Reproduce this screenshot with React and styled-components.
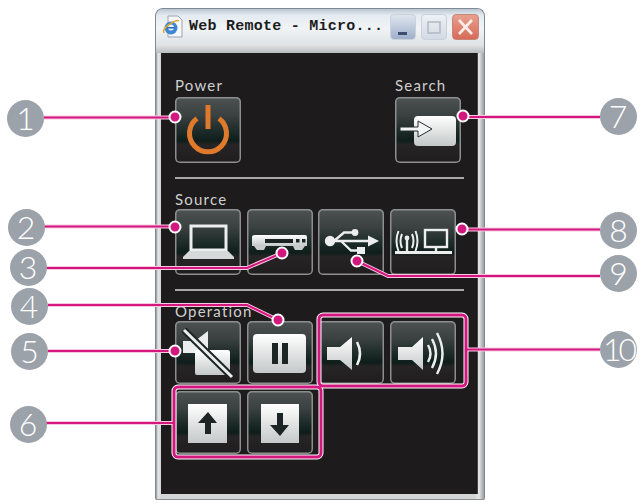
import React from 'react';
import styled, { createGlobalStyle } from 'styled-components';

const GlobalStyle = createGlobalStyle`
  html, body { margin: 0; padding: 0; background: #fff; }
  body { font-family: "Liberation Sans", Arial, sans-serif; }
`;

const MAGENTA = '#d3177f';

const Stage = styled.div`
  position: relative;
  width: 642px;
  height: 504px;
  overflow: hidden;
  background: #fff;
  padding: 8px 0 0 155px;
  box-sizing: border-box;
`;

const Window = styled.div`
  width: 330px;
  height: 492px;
  box-sizing: border-box;
  display: flex;
  flex-direction: column;
  border: 1px solid #7f8a94;
  border-bottom-color: #8f8f8f;
  border-radius: 8px 8px 2px 2px;
  background: linear-gradient(90deg, #8e9296 0, #e4e6e8 2px, #d2d4d6 5px, #d2d4d6 97%, #e6e6e6 98.5%, #9a9c9e 100%);
`;

const TitleBar = styled.div`
  height: 35px;
  flex: none;
  display: flex;
  align-items: center;
  padding: 0 5px 0 6px;
  border-radius: 7px 7px 0 0;
  background: linear-gradient(180deg, #b9c6d2 0, #e4ebf1 18%, #f1f4f6 55%, #dfe4e8 100%);
`;

const TitleText = styled.div`
  flex: 1;
  margin-left: 5px;
  font-family: "Liberation Mono", monospace;
  font-weight: 700;
  font-size: 15px;
  letter-spacing: 0.25px;
  color: #1c1c20;
  white-space: nowrap;
`;

const WinButton = styled.div`
  width: ${p => p.$w || 26}px;
  height: 26px;
  margin-left: 5px;
  box-sizing: border-box;
  position: relative;
  border-radius: 4px;
  border: 1px solid ${p => p.$kind === 'close' ? '#c8867a' : '#c9d1da'};
  background: ${p =>
    p.$kind === 'close' ? 'linear-gradient(180deg, #e8a08e, #d86a58)'
    : p.$kind === 'min' ? 'linear-gradient(180deg, #dfe5ee, #9fb0cc)'
    : 'linear-gradient(180deg, #eef1f5, #d3dae3)'};
`;

const Band = styled.div`
  height: 9px;
  flex: none;
  background: linear-gradient(180deg, #e6e8ea, #b9bcbf);
`;

const Client = styled.div`
  flex: 1;
  margin: 0 6px 5px 5px;
  padding: 28px 13px 0 14px;
  background: #1e1b1c;
  border-right: 1px solid #444;
`;

const TopRow = styled.div`
  display: flex;
  justify-content: space-between;
  padding-right: 3px;
`;

const Group = styled.div`
  display: flex;
  flex-direction: column;
`;

const Label = styled.div`
  height: 16px;
  line-height: ${p => 16 - 2 * (p.$lift || 2)}px;
  font-size: 15px;
  letter-spacing: 1.2px;
  color: #cfcfcf;
  font-family: "Lato", "Liberation Sans", sans-serif;
  font-weight: 400;
  white-space: nowrap;
`;

const Rule = styled.div`
  height: 2px;
  margin: 14px 0;
  background: #a8a8a8;
`;

const ButtonRow = styled.div`
  display: flex;
  gap: 5.7px;
  margin-bottom: ${p => p.$after || 0}px;
`;

const RemoteButton = styled.div`
  width: 66px;
  height: ${p => p.$h}px;
  flex: none;
  border-radius: 5px;
  overflow: hidden;
  box-shadow: inset 0 0 0 1.5px #8d8f8f;
  background: linear-gradient(180deg, #4d5252 0, #3a4140 28%, #1c2a28 52%, #0e1e1a 66%, #262424 72%, #1f1d1d 100%);
  svg { display: block; }
`;

const Overlay = styled.svg`
  position: absolute;
  left: 0;
  top: 0;
  pointer-events: none;
`;

const Badge = styled.div`
  position: absolute;
  left: ${p => p.$x - 18.5}px;
  top: ${p => p.$y - 18.5}px;
  width: 37px;
  height: 37px;
  border-radius: 50%;
  background: #9ba2a9;
  color: #fff;
  display: flex;
  align-items: center;
  justify-content: center;
  font-family: "Lato", "Noto Sans", sans-serif;
  font-weight: 300;
  font-size: 32px;
  letter-spacing: ${p => p.$tight ? '-3px' : '0'};
  line-height: 1;
`;

const LIGHT = '#eceeee';

// one svg per button, same coordinate box as the button itself
function Icon({ h, children }) {
  return (
    <svg width="66" height={h} viewBox={`0 0 66 ${h}`}>
      <defs>
        <linearGradient id={`g${h}`} x1="0" y1="0" x2="0" y2="1">
          <stop offset="0" stopColor="#ffffff" />
          <stop offset="1" stopColor="#c4c8c8" />
        </linearGradient>
      </defs>
      {children}
    </svg>
  );
}

const PowerIcon = () => (
  <Icon h={66}>
    <path d="M22 21.5A18.5 18.5 0 1 0 44 21.5" fill="none" stroke="#df7a2d" strokeWidth="5" />
    <rect x="30.5" y="8" width="5" height="24" fill="#df7a2d" />
  </Icon>
);

const SearchIcon = () => (
  <Icon h={66}>
    <rect x="19" y="19" width="42" height="30" rx="4" fill="url(#g66)" />
    <path d="M5 30H23V24L37 32L23 40V34H5Z" fill="#f4f4f4" stroke="#23302e" strokeWidth="1" />
  </Icon>
);

const LaptopIcon = () => (
  <Icon h={66}>
    <rect x="16" y="17" width="35" height="24" fill="none" stroke={LIGHT} strokeWidth="3" />
    <path d="M14 42H53L59 48V50H8V48Z" fill="#d6d9d9" />
  </Icon>
);

const DeviceIcon = () => (
  <Icon h={66}>
    <path d="M8 26H58Q60 26 60 28V37H5V28Q5 26 8 26Z" fill="url(#g66)" />
    <path d="M7 37H19L17 41H10ZM46 37H58L55 41H48Z" fill="#c9cccc" />
    <rect x="18" y="30" width="28" height="4" fill="#1b2423" />
    <rect x="49" y="30" width="3.5" height="3.5" fill="#1b2423" />
    <rect x="55" y="30" width="3.5" height="3.5" fill="#1b2423" />
  </Icon>
);

const UsbIcon = () => (
  <Icon h={66}>
    <circle cx="12" cy="32" r="5.2" fill={LIGHT} />
    <path d="M12 32H54" stroke={LIGHT} strokeWidth="2.6" />
    <path d="M50 26.5L61 32L50 37.5Z" fill={LIGHT} />
    <path d="M16 32L26 23.5H35M23 32L33 41.5H40" fill="none" stroke={LIGHT} strokeWidth="2.4" />
    <circle cx="37" cy="23.5" r="3.4" fill={LIGHT} />
    <rect x="39" y="38" width="8" height="7" fill={LIGHT} />
  </Icon>
);

const NetworkIcon = () => (
  <Icon h={66}>
    <g fill="none" stroke={LIGHT} strokeWidth="2">
      <path d="M12 25Q9 32 12 39M8.5 22Q4.5 32 8.5 42" />
      <path d="M22 25Q25 32 22 39M25.5 22Q29.5 32 25.5 42" />
    </g>
    <circle cx="17" cy="29" r="2.4" fill={LIGHT} />
    <path d="M17 29V42" stroke={LIGHT} strokeWidth="2.4" />
    <rect x="35" y="21" width="22" height="17" fill="none" stroke={LIGHT} strokeWidth="2.4" />
    <path d="M46 38V42" stroke={LIGHT} strokeWidth="2.4" />
    <rect x="5" y="42" width="57" height="3" fill={LIGHT} />
  </Icon>
);

const MuteIcon = () => (
  <Icon h={63}>
    <path d="M8 20H20L33 10V44L20 32H8Z" fill={LIGHT} />
    <rect x="20" y="29" width="35" height="25" rx="2" fill="url(#g63)" />
    <path d="M9 9L57 56" stroke="#1d2524" strokeWidth="7" />
    <path d="M9 9L57 56" stroke={LIGHT} strokeWidth="3" />
  </Icon>
);

const PauseIcon = () => (
  <Icon h={63}>
    <rect x="6" y="13" width="53" height="39" rx="4" fill="url(#g63)" />
    <rect x="25" y="22" width="6" height="21" fill="#1c2524" />
    <rect x="35" y="22" width="6" height="21" fill="#1c2524" />
  </Icon>
);

const VolDownIcon = () => (
  <Icon h={63}>
    <path d="M9 26H22L34 16V49L22 39H9Z" fill="url(#g63)" />
    <path d="M39 21Q45 32.5 39 44" fill="none" stroke={LIGHT} strokeWidth="2.6" />
  </Icon>
);

const VolUpIcon = () => (
  <Icon h={63}>
    <path d="M8 26H22L33 16V49L22 39H8Z" fill="url(#g63)" />
    <g fill="none" stroke={LIGHT} strokeWidth="2.4">
      <path d="M38 24Q43 32.5 38 41" />
      <path d="M42 18Q50 32.5 42 47" />
      <path d="M47 12Q58 32.5 47 53" />
    </g>
  </Icon>
);

const UpIcon = () => (
  <Icon h={63}>
    <rect x="13" y="13" width="39" height="39" fill="url(#g63)" />
    <path d="M33 21L42 32H36V43H30V32H23Z" fill="#1c2524" />
  </Icon>
);

const DownIcon = () => (
  <Icon h={63}>
    <rect x="14" y="13" width="38" height="39" fill="url(#g63)" />
    <path d="M33 45L42 34H36V22H30V34H23Z" fill="#1c2524" />
  </Icon>
);

const IeIcon = () => (
  <svg width="22" height="24" viewBox="0 0 22 24">
    <path d="M6 1H16L20 5V22H6Z" fill="#f7f8fa" stroke="#9aa3ad" />
    <circle cx="9" cy="13" r="6.5" fill="#3f86d6" />
    <circle cx="9" cy="12.5" r="3" fill="#e8f2fb" />
    <rect x="5" y="12" width="8" height="1.6" fill="#2e6fc0" />
    <path d="M2 18Q0 14 8 9Q15 4 17 6" fill="none" stroke="#e3a92f" strokeWidth="1.5" />
  </svg>
);

// leader lines and the pink boxes drawn on top of the screenshot
const leaders = [
  'M44 117.5H175',
  'M463 117H600',
  'M44 226.5H175',
  'M46 268H247L282 253',
  'M463 229.5H600',
  'M600 276H388L357 261',
  'M48 305H247L278 320',
  'M48 351H175',
  'M46 423H173',
  'M467 349.5H600',
];

const dots = [
  [175, 117], [463, 116], [175, 227], [282, 253], [462, 229],
  [357, 261], [278, 320], [175, 351],
];

const boxes = [
  { x: 319, y: 315, w: 147, h: 71 },
  { x: 174, y: 387, w: 147, h: 70 },
];

const badges = [
  { n: 1, x: 25.5, y: 118 },
  { n: 2, x: 26, y: 227 },
  { n: 3, x: 28, y: 267 },
  { n: 4, x: 29, y: 306 },
  { n: 5, x: 29.5, y: 351 },
  { n: 6, x: 28, y: 424 },
  { n: 7, x: 618, y: 116 },
  { n: 8, x: 618.5, y: 230 },
  { n: 9, x: 618.5, y: 273 },
  { n: 10, x: 618.5, y: 349 },
];

function Callouts() {
  return (
    <>
      <Overlay width="642" height="504">
        <g fill="none" stroke="#f7c6df" strokeWidth="4" >
          {leaders.map(d => <path key={d} d={d} />)}
        </g>
        <g fill="none" stroke="#fff" strokeWidth="5">
          {boxes.map(b => <rect key={b.x} x={b.x} y={b.y} width={b.w} height={b.h} rx="4" />)}
        </g>
        <g fill="none" stroke={MAGENTA} strokeWidth="2">
          {leaders.map(d => <path key={d} d={d} />)}
        </g>
        <g fill="none" stroke={MAGENTA} strokeWidth="3">
          {boxes.map(b => <rect key={b.x} x={b.x} y={b.y} width={b.w} height={b.h} rx="4" />)}
        </g>
        {dots.map(([x, y]) => (
          <circle key={x + '-' + y} cx={x} cy={y} r="5.5" fill={MAGENTA} stroke="#fff" strokeWidth="2" />
        ))}
      </Overlay>
      {badges.map(b => (
        <Badge key={b.n} $x={b.x} $y={b.y} $tight={b.n === 10}>{b.n}</Badge>
      ))}
    </>
  );
}

export default function App() {
  return (
    <Stage>
      <GlobalStyle />
      <Window>
        <TitleBar>
          <IeIcon />
          <TitleText>Web Remote - Micro...</TitleText>
          <WinButton $kind="min">
            <svg width="24" height="24" viewBox="0 0 24 24"><rect x="7" y="17" width="9" height="3" fill="#3d4f70" /></svg>
          </WinButton>
          <WinButton $kind="max">
            <svg width="24" height="24" viewBox="0 0 24 24"><rect x="6" y="7" width="12" height="11" fill="none" stroke="#aeb8c4" strokeWidth="1.5" /></svg>
          </WinButton>
          <WinButton $kind="close" $w={27}>
            <svg width="25" height="24" viewBox="0 0 25 24"><path d="M6 5L19 19M19 5L6 19" stroke="#fbeee9" strokeWidth="2.6" /></svg>
          </WinButton>
        </TitleBar>
        <Band />
        <Client>
          <TopRow>
            <Group>
              <Label $lift={4}>Power</Label>
              <RemoteButton $h={66}><PowerIcon /></RemoteButton>
            </Group>
            <Group>
              <Label $lift={4}>Search</Label>
              <RemoteButton $h={66}><SearchIcon /></RemoteButton>
            </Group>
          </TopRow>
          <Rule />
          <Label>Source</Label>
          <ButtonRow>
            <RemoteButton $h={66}><LaptopIcon /></RemoteButton>
            <RemoteButton $h={66}><DeviceIcon /></RemoteButton>
            <RemoteButton $h={66}><UsbIcon /></RemoteButton>
            <RemoteButton $h={66}><NetworkIcon /></RemoteButton>
          </ButtonRow>
          <Rule />
          <Label>Operation</Label>
          <ButtonRow $after={7}>
            <RemoteButton $h={63}><MuteIcon /></RemoteButton>
            <RemoteButton $h={63}><PauseIcon /></RemoteButton>
            <RemoteButton $h={63}><VolDownIcon /></RemoteButton>
            <RemoteButton $h={63}><VolUpIcon /></RemoteButton>
          </ButtonRow>
          <ButtonRow>
            <RemoteButton $h={63}><UpIcon /></RemoteButton>
            <RemoteButton $h={63}><DownIcon /></RemoteButton>
          </ButtonRow>
        </Client>
      </Window>
      <Callouts />
    </Stage>
  );
}
